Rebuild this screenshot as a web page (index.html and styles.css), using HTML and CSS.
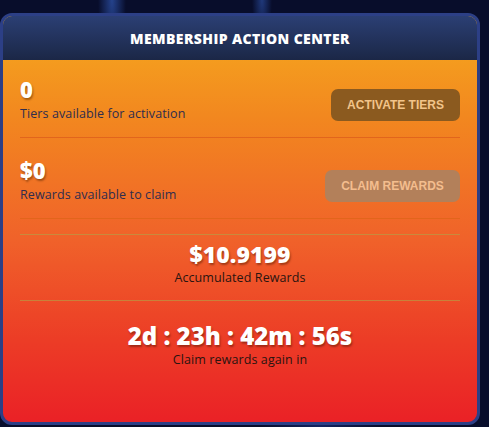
FILE: index.html
```html
<!DOCTYPE html>
<html lang="en">
<head>
<meta charset="utf-8">
<title>Membership Action Center</title>
<link rel="stylesheet" href="styles.css">
</head>
<body>
<div class="card">
  <div class="card-header">MEMBERSHIP ACTION CENTER</div>
  <div class="card-body">
    <div class="row row-first">
      <div class="stat">
        <div class="stat-value">0</div>
        <div class="stat-label">Tiers available for activation</div>
      </div>
      <button class="btn btn-activate">ACTIVATE TIERS</button>
    </div>
    <div class="row">
      <div class="stat">
        <div class="stat-value">$0</div>
        <div class="stat-label">Rewards available to claim</div>
      </div>
      <button class="btn btn-claim">CLAIM REWARDS</button>
    </div>
    <div class="center-block accumulated">
      <div class="center-value">$10.9199</div>
      <div class="center-label">Accumulated Rewards</div>
    </div>
    <div class="center-block countdown">
      <div class="center-value big">2d : 23h : 42m : 56s</div>
      <div class="center-label">Claim rewards again in</div>
    </div>
  </div>
</div>
</body>
</html>
```

FILE: styles.css
```css
* { box-sizing: border-box; }
html, body { height: 100%; }
body {
  margin: 0;
  padding-top: 13px;
  font-family: "Open Sans", "Liberation Sans", sans-serif;
  background:
    radial-gradient(ellipse 14px 60px at 112px 0px, rgba(60,110,220,0.55), transparent),
    radial-gradient(ellipse 10px 40px at 262px 0px, rgba(60,110,220,0.45), transparent),
    radial-gradient(ellipse 60px 20px at 320px 427px, rgba(40,80,200,0.35), transparent),
    #080d2b;
  overflow: hidden;
}
.card {
  width: 480px;
  height: 412px;
  border: 3px solid #2c3f86;
  border-radius: 12px;
  overflow: hidden;
  display: flex;
  flex-direction: column;
  background: linear-gradient(180deg, #f6ab1e 0%, #f2871f 25%, #f0622a 55%, #ec3c26 80%, #ea2126 100%);
}
.card-header {
  height: 44px;
  flex: none;
  display: flex;
  align-items: center;
  justify-content: center;
  background: linear-gradient(180deg, #2b3f74 0%, #1b2746 100%);
  color: #fff;
  font-weight: 800;
  font-size: 14px;
  letter-spacing: 0.4px;
}
.card-body {
  flex: 1;
  padding: 0 17px;
  display: flex;
  flex-direction: column;
}
.row {
  display: flex;
  justify-content: space-between;
  align-items: flex-end;
  border-bottom: 1px solid #e2651c;
  padding-bottom: 15px;
  height: 81px;
  flex: none;
}
.row-first { height: 78px; }
.stat-value {
  color: #fff;
  font-weight: 800;
  font-size: 22px;
  line-height: 26px;
  text-shadow: 1px 2px 2px rgba(70,30,0,0.45);
}
.stat-label {
  color: #2f2d4e;
  font-size: 12.5px;
  letter-spacing: 0.1px;
  line-height: 16px;
  margin-top: 4px;
}
.btn {
  border: none;
  border-radius: 7px;
  font-family: "Liberation Sans", Arial, sans-serif;
  font-weight: 700;
  font-size: 12px;
  height: 32px;
  margin-bottom: 1px;
  cursor: pointer;
}
.btn-activate {
  width: 129px;
  background: #8b5a1f;
  color: #f2c48a;
}
.btn-claim {
  width: 135px;
  background: #b3805a;
  color: #f4bd8e;
}
.center-block {
  text-align: center;
  flex: none;
}
.accumulated {
  margin-top: 15px;
  height: 67px;
  border-top: 1px solid #c98a3c;
  border-bottom: 1px solid #c8813a;
  padding-top: 6px;
}
.countdown { padding-top: 21px; }
.center-value {
  color: #fff;
  font-weight: 800;
  font-size: 23px;
  line-height: 26px;
  text-shadow: 1px 2px 2px rgba(70,20,0,0.45);
}
.center-value.big { font-size: 24px; line-height: 28px; }
.center-label {
  color: #2a1410;
  font-size: 12.5px;
  letter-spacing: 0.1px;
  line-height: 16px;
  margin-top: 3px;
}
.countdown .center-label { margin-top: 2px; }
```
